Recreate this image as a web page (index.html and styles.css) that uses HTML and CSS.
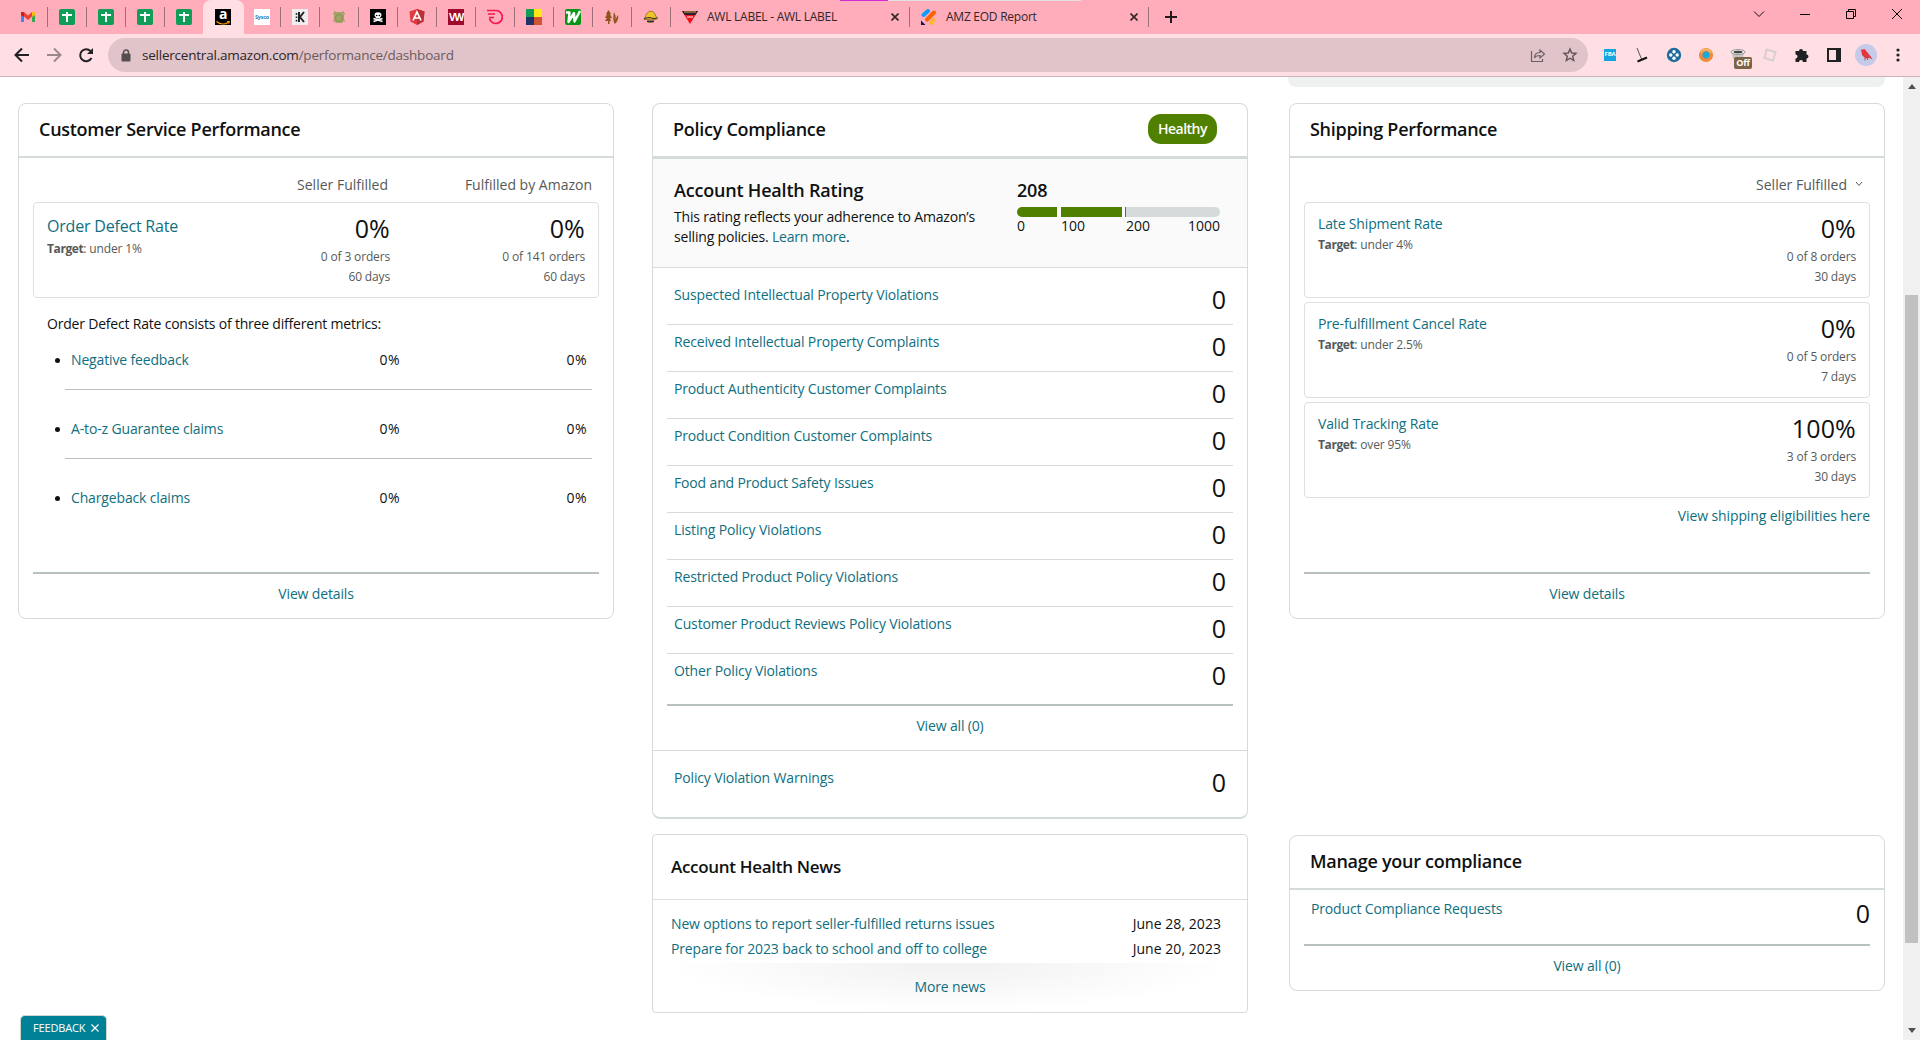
FILE: index.html
```html
<!DOCTYPE html>
<html lang="en">
<head>
  <meta charset="UTF-8" />
  <meta name="viewport" content="width=device-width, initial-scale=1.0"/>
  <title>Account Health</title>
  <link rel="stylesheet" href="styles.css">
</head>
<body>
  <!-- Browser window -->
  <div class="tabstrip">
    <div class="tab"><svg width="16" height="16" viewBox="0 0 16 16"><path d="M1 3v10h3V7z" fill="#4285f4"/><path d="M15 3v10h-3V7z" fill="#34a853"/><path d="M1 3l3 0 4 3.5L12 3v4.5L8 11 4 7.5 1 5.5z" fill="#ea4335"/><path d="M12 3.5L13.500 2.500 15 3v3l-3 2z" fill="#fbbc04"/><path d="M1 3.500l1-.8 2 1V8L1 6z" fill="#c5221f"/></svg></div>
    <div class="tab"><svg width="16" height="16"><rect width="16" height="16" rx="2" fill="#0f9d58"/><path d="M3 6h10M8 3v10" stroke="#fff" stroke-width="2"/></svg></div>
    <div class="tab"><svg width="16" height="16"><rect width="16" height="16" rx="2" fill="#0f9d58"/><path d="M3 6h10M8 3v10" stroke="#fff" stroke-width="2"/></svg></div>
    <div class="tab"><svg width="16" height="16"><rect width="16" height="16" rx="2" fill="#0f9d58"/><path d="M3 6h10M8 3v10" stroke="#fff" stroke-width="2"/></svg></div>
    <div class="tab no-line"><svg width="16" height="16"><rect width="16" height="16" rx="2" fill="#0f9d58"/><path d="M3 6h10M8 3v10" stroke="#fff" stroke-width="2"/></svg></div>
    <div class="tab active"><div class="fav amazon"><span>a</span><svg width="16" height="4" viewBox="0 0 16 4"><path d="M1.500 .5c4 3.200 9 3.200 12 .8M12 .5l2.300.2-.6 1.800" fill="none" stroke="#f90" stroke-width="1.200"/></svg></div></div>
    <div class="tab"><div class="fav sysco">Sysco</div></div>
    <div class="tab"><svg width="16" height="16"><rect width="16" height="16" fill="#eee"/><path d="M7 3v10M12 3L8 8l4 5" fill="none" stroke="#222" stroke-width="2"/><path d="M4.500 4v9" stroke="#222" stroke-width="1.600" stroke-dasharray="1.700 1.700"/></svg></div>
    <div class="tab"><svg width="16" height="16" viewBox="0 0 16 16"><path d="M3 2l3 1h4l3-1v10l-2 2H5l-2-2z" fill="#a3a36b"/><path d="M2 5l2-1M14 5l-2-1M2 12l2-1M14 12l-2-1" stroke="#b4a070" stroke-width="1.500"/><circle cx="8" cy="9" r="3.500" fill="none" stroke="#83934b"/></svg></div>
    <div class="tab"><svg width="16" height="16"><rect width="16" height="16" fill="#000"/><path d="M3.500 9.500l9 3M12.500 9.500l-9 3" stroke="#fff" stroke-width="1.600"/><path d="M4.500 6a3.500 2.800 0 0 1 7 0c0 2-1.500 1.500-1.500 3.500H6C6 7.500 4.500 8 4.500 6z" fill="#fff"/><circle cx="6.700" cy="6.500" r=".8" /><circle cx="9.300" cy="6.500" r=".8"/></svg></div>
    <div class="tab"><svg width="16" height="16"><path d="M8 0l7.500 2.500-1 10L8 16l-6.500-3.500-1-10z" fill="#dd3c41"/><path d="M8 0l7.500 2.500-1 10L8 16z" fill="#b83136"/><path d="M4 11.500L8 3l4 8.500M5.500 9h5" fill="none" stroke="#fff" stroke-width="1.700"/></svg></div>
    <div class="tab"><div class="fav vw">VW</div></div>
    <div class="tab"><svg width="16" height="16"><path d="M0 1.500h9a6.500 6.500 0 1 1-6.500 8M1 5h7M2 8.500h5" fill="none" stroke="#f8174b" stroke-width="1.700"/></svg></div>
    <div class="tab"><svg width="16" height="16"><path d="M0 0h8v8H0z" fill="#0f9d58"/><path d="M8 0h8v8H8z" fill="#ffe81a"/><path d="M0 8h8v8H0z" fill="#243269"/><path d="M8 8h8v8H8z" fill="#d35433"/></svg></div>
    <div class="tab"><svg width="16" height="16"><rect width="16" height="16" rx="2" fill="#0a9416"/><path d="M1 3.500h3.500L3.500 13 9 4l.5 8.500L15 2" fill="none" stroke="#fff" stroke-width="2.400" stroke-linejoin="round"/></svg></div>
    <div class="tab"><svg width="16" height="16"><path d="M4.500 1L7 5H6l2 4H6l1 3H5.500v3h-1.500v-3H1l2-3H1l2-4H2z" fill="#8e561b"/><path d="M10 3c2.500 4 2 8 .5 12-1.500-4-1.500-7-.5-12zM14 6c1 4-1 7-3 9 0-4 1-6 3-9z" fill="#8e561b"/></svg></div>
    <div class="tab"><svg width="16" height="16"><path d="M2.500 8C4 0 12 1 12.500 7l2.500 2-2 1.500H1z" fill="#efc529" stroke="#7a6223" stroke-width=".7"/><path d="M1 9.500l5-1 5 1 3-.5" fill="none" stroke="#332c20" stroke-width="1.200"/><path d="M3 10h9l-2 4H5z" fill="#b47b4c"/><path d="M4 12.500h7" stroke="#234" stroke-width="1.200"/></svg></div>
    <div class="tab wide"><svg width="16" height="16"><path d="M0 2h16l-8 13z" fill="#ef101c"/><path d="M0 2h16l-2.500 4h-11z" fill="#302034"/><path d="M2 3h12" stroke="#d7a83c"/><path d="M5 8h6" stroke="#fff"/></svg><span class="tab-name">AWL LABEL - AWL LABEL</span><svg class="close" width="8" height="8"><path d="M.5.5l7 7M7.500.5l-7 7" stroke="#322628" stroke-width="1.600"/></svg></div>
    <div class="tab wide"><svg width="16" height="16"><g stroke-width="4" stroke-linecap="round"><path d="M2.500 6L7 2" stroke="#0a9dff"/><path d="M6 10.500l7-7" stroke="#ff6100"/><path d="M10 14l2.500-3" stroke="#ffb629"/></g><path d="M0 11.500V16h4.500z" fill="#0a1551"/></svg><span class="tab-name">AMZ EOD Report</span><svg class="close" width="8" height="8"><path d="M.5.5l7 7M7.500.5l-7 7" stroke="#322628" stroke-width="1.600"/></svg></div>
    <svg class="new-tab" width="12" height="12"><path d="M6 0v12M0 6h12" stroke="#24191b" stroke-width="2"/></svg>
    <div class="window-controls">
      <svg width="12" height="12"><path d="M1 3.500l5 5 5-5" fill="none" stroke="#111"/></svg>
      <svg width="12" height="12"><path d="M1 6.500h10" stroke="#000"/></svg>
      <svg width="12" height="12"><path d="M1.500 3.500h7v7h-7zM3.500 3.500v-2h7v7h-2" fill="none" stroke="#000"/></svg>
      <svg width="12" height="12"><path d="M1 1l10 10M11 1L1 11" stroke="#000"/></svg>
    </div>
    <div class="load-bar"></div>
  </div>
  <div class="toolbar">
    <svg width="16" height="16"><path d="M15 8H2M8 1.500L1.500 8 8 14.500" fill="none" stroke="#202124" stroke-width="2"/></svg>
    <svg width="16" height="16"><path d="M1 8h13M8 1.500L14.500 8 8 14.500" fill="none" stroke="#9b878c" stroke-width="2"/></svg>
    <svg width="16" height="16"><path d="M13.500 11a6 6 0 1 1-1-7" fill="none" stroke="#202124" stroke-width="2"/><path d="M15 1v6H9z" fill="#202124"/></svg>
    <div class="address">
      <svg class="lock" width="10" height="13"><path d="M2.500 5V3.500a2.500 2.500 0 0 1 5 0V5" fill="none" stroke="#564d50" stroke-width="1.500"/><rect x=".5" y="4.500" width="9" height="8" rx="1" fill="#564d50"/></svg>
      <span class="url">sellercentral.amazon.com<span>/performance/dashboard</span></span>
      <svg class="share" width="16" height="16"><path d="M1.500 4v10.500h11V12" fill="none" stroke="#6c5f63" stroke-width="1.200"/><path d="M4.500 11c0-4 2-5.500 5.500-5.500V3l4.500 4L10 11V8.500C7 8.500 5.500 9 4.500 11z" fill="none" stroke="#6c5f63" stroke-width="1.200"/></svg>
      <svg width="16" height="16"><path d="M8 2l1.700 4 4.300.4-3.300 2.800 1 4.300L8 11.200l-3.700 2.300 1-4.300L2 6.400 6.300 6z" fill="none" stroke="#5f5357" stroke-width="1.400"/></svg>
    </div>
    <div class="extensions">
      <span class="fba">FBA</span>
      <svg width="16" height="16"><path d="M3 1l4.500 11" stroke="#555" stroke-width="1"/><path d="M3.500 14.500L13 10.500" stroke="#111" stroke-width="2"/></svg>
      <svg width="16" height="16"><circle cx="8" cy="8" r="7.200" fill="#1f6b9b"/><g fill="#fff"><circle cx="8" cy="4.800" r="1.700"/><circle cx="8" cy="11.200" r="1.700"/><circle cx="4.800" cy="8" r="1.700"/><circle cx="11.200" cy="8" r="1.700"/></g></svg>
      <svg width="16" height="16"><circle cx="8" cy="8" r="5.300" fill="#19a9dc" stroke="#f08a3c" stroke-width="3.600"/><path d="M3 6a5.300 5.300 0 0 1 10 0" fill="none" stroke="#f5b564" stroke-width="2"/></svg>
      <div class="off-ext"><svg width="16" height="16"><path d="M2 5l1 7h10l1-7z" fill="#c8c2c4"/><ellipse cx="8" cy="5" rx="7" ry="2.500" fill="#eee" stroke="#999"/><ellipse cx="8" cy="5" rx="4.500" ry="1.300" fill="#444"/></svg><span class="off-badge">Off</span></div>
      <svg width="16" height="16"><path d="M4.500 2.500l9 2.500-2.500 8.500-8.500-2.500z" fill="none" stroke="#d7cfcf" stroke-width="2"/></svg>
      <svg width="16" height="16"><path d="M1.500 4H5a2 2 0 1 1 4 0h3.500v3.500a2 2 0 1 1 0 4V15H9a2 2 0 0 0-4 0H1.500v-3.500a2 2 0 0 0 0-4z" fill="#202124"/></svg>
      <svg width="16" height="16"><path d="M2 2h12v12H2z" fill="none" stroke="#202124" stroke-width="2"/><path d="M10 2h4v12h-4z" fill="#202124"/></svg>
      <svg width="22" height="22"><circle cx="11" cy="11" r="11" fill="#c5cae9"/><path d="M5.500 6l4-1 3 3.500 3.500 4.500 1.500 2.500-3-1.500-4 .5-3.500-3.500-.5-3.500z" fill="#e8313d"/><path d="M10 10l5 4M10 14v2.500M12.500 14v2" stroke="#b05a54"/></svg>
      <svg width="16" height="16"><g fill="#202124"><circle cx="8" cy="3" r="1.600"/><circle cx="8" cy="8" r="1.600"/><circle cx="8" cy="13" r="1.600"/></g></svg>
    </div>
  </div>

  <div class="viewport">
    <div class="page">
      <!-- Left column -->
      <div class="column">
        <div class="card perf-card">
          <h2 class="card-header">Customer Service Performance</h2>
          <div class="card-body">
            <div class="column-heads"><span>Seller Fulfilled</span><span class="by-amazon">Fulfilled by Amazon</span></div>
            <div class="metric">
              <div class="metric-name"><a class="big-link">Order Defect Rate</a><p><b>Target</b>: under 1%</p></div>
              <div class="metric-value"><strong>0%</strong><span>0 of 3 orders</span><span>60 days</span></div>
              <div class="metric-value amazon-value"><strong>0%</strong><span>0 of 141 orders</span><span>60 days</span></div>
            </div>
            <p class="consists">Order Defect Rate consists of three different metrics:</p>
            <ul class="defects">
              <li><a>Negative feedback</a><span>0%</span><span>0%</span></li>
              <li><a>A-to-z Guarantee claims</a><span>0%</span><span>0%</span></li>
              <li><a>Chargeback claims</a><span>0%</span><span>0%</span></li>
            </ul>
            <div class="card-footer"><a>View details</a></div>
          </div>
        </div>
      </div>

      <!-- Middle column -->
      <div class="column">
        <div class="card policy-card">
          <h2 class="card-header">Policy Compliance <span class="badge">Healthy</span></h2>
          <div class="rating">
            <div class="rating-text">
              <h3>Account Health Rating</h3>
              <p>This rating reflects your adherence to Amazon’s<br>selling policies. <a>Learn more</a>.</p>
            </div>
            <div class="rating-score">
              <h3>208</h3>
              <div class="score-bar"><i class="seg-low"></i><i class="seg-mid"></i><i class="seg-now"></i><i class="seg-rest"></i></div>
              <div class="score-labels"><span>0</span><span>100</span><span>200</span><span>1000</span></div>
            </div>
          </div>
          <div class="policies">
            <div class="policy"><a>Suspected Intellectual Property Violations</a><strong>0</strong></div>
            <div class="policy"><a>Received Intellectual Property Complaints</a><strong>0</strong></div>
            <div class="policy"><a>Product Authenticity Customer Complaints</a><strong>0</strong></div>
            <div class="policy"><a>Product Condition Customer Complaints</a><strong>0</strong></div>
            <div class="policy"><a>Food and Product Safety Issues</a><strong>0</strong></div>
            <div class="policy"><a>Listing Policy Violations</a><strong>0</strong></div>
            <div class="policy"><a>Restricted Product Policy Violations</a><strong>0</strong></div>
            <div class="policy"><a>Customer Product Reviews Policy Violations</a><strong>0</strong></div>
            <div class="policy"><a>Other Policy Violations</a><strong>0</strong></div>
            <div class="card-footer"><a>View all (0)</a></div>
          </div>
          <div class="warnings">
            <div class="policy"><a>Policy Violation Warnings</a><strong>0</strong></div>
          </div>
        </div>
        <div class="card news-card">
          <h2>Account Health News</h2>
          <div class="news">
            <div class="news-item"><a>New options to report seller-fulfilled returns issues</a><span>June 28, 2023</span></div>
            <div class="news-item"><a>Prepare for 2023 back to school and off to college</a><span>June 20, 2023</span></div>
          </div>
          <div class="more-news"><a>More news</a></div>
        </div>
      </div>

      <!-- Right column -->
      <div class="column right-column">
        <div class="top-panel"></div>
        <div class="card perf-card">
          <h2 class="card-header">Shipping Performance</h2>
          <div class="card-body">
            <div class="column-heads select"><span>Seller Fulfilled</span><svg width="8" height="6"><path d="M1 1l3 3.500L7 1" fill="none" stroke="#565959"/></svg></div>
            <div class="metric">
              <div class="metric-name"><a>Late Shipment Rate</a><p><b>Target</b>: under 4%</p></div>
              <div class="metric-value"><strong>0%</strong><span>0 of 8 orders</span><span>30 days</span></div>
            </div>
            <div class="metric">
              <div class="metric-name"><a>Pre-fulfillment Cancel Rate</a><p><b>Target</b>: under 2.5%</p></div>
              <div class="metric-value"><strong>0%</strong><span>0 of 5 orders</span><span>7 days</span></div>
            </div>
            <div class="metric">
              <div class="metric-name"><a>Valid Tracking Rate</a><p><b>Target</b>: over 95%</p></div>
              <div class="metric-value"><strong>100%</strong><span>3 of 3 orders</span><span>30 days</span></div>
            </div>
            <a class="eligibilities">View shipping eligibilities here</a>
            <div class="card-footer"><a>View details</a></div>
          </div>
        </div>
        <div class="card manage-card">
          <h2 class="card-header">Manage your compliance</h2>
          <div class="card-body">
            <div class="policy"><a>Product Compliance Requests</a><strong>0</strong></div>
            <div class="card-footer"><a>View all (0)</a></div>
          </div>
        </div>
      </div>
    </div>

    <div class="scrollbar">
      <svg width="8" height="5"><path d="M0 5l4-5 4 5z" fill="#505050"/></svg>
      <div class="thumb"></div>
      <svg width="8" height="5"><path d="M0 0l4 5 4-5z" fill="#505050"/></svg>
    </div>
    <div class="feedback">FEEDBACK <svg width="8" height="8"><path d="M.5.5l7 7M7.500.5l-7 7" stroke="#fff" stroke-width="1.200"/></svg></div>
  </div>
</body>
</html>
```
FILE: styles.css
```css
* {
  box-sizing: border-box;
}
body {
  margin: 0;
  height: 1040px;
  overflow: hidden;
  background: #fff;
  color: #0f1111;
  font-family: "Open Sans", "Noto Sans", sans-serif;
  font-size: 14px;
  line-height: 20px;
  letter-spacing: -0.15px;
}
h2, h3, p, ul {
  margin: 0;
  padding: 0;
}
svg {
  display: block;
  flex: none;
}
a {
  color: #0f6f80;
}

/* Browser window */
.tabstrip {
  position: relative;
  display: flex;
  height: 34px;
  padding-left: 9px;
  background: #ffacbb;
  color: #322628;
  font-size: 12px;
  letter-spacing: -0.25px;
}
.tab {
  position: relative;
  display: flex;
  align-items: center;
  width: 39px;
  height: 34px;
  padding-left: 11px;
}
.tab::after {
  content: "";
  position: absolute;
  right: 0;
  top: 7px;
  width: 1px;
  height: 20px;
  background: #9c7078;
}
.tab.no-line::after,
.tab.active::after {
  display: none;
}
.tab.active {
  width: 41px;
  margin: 0 0 0 -1px;
  padding-left: 12px;
  border-radius: 8px 8px 0 0;
  background: #ffdfe4;
}
.tab.active + .tab {
  width: 37px;
  padding-left: 10px;
}
.tab.wide {
  width: 239px;
}
.tab-name {
  flex: 1;
  margin-left: 9px;
}
.close {
  margin-right: 11px;
}
.fav {
  width: 16px;
  height: 16px;
  text-align: center;
  font-weight: 700;
}
.amazon {
  background: #000;
  color: #fff;
  font-size: 14px;
}
.amazon span {
  display: block;
  height: 12px;
  line-height: 9px;
}
.sysco {
  background: #fff;
  color: #1b87c9;
  font-size: 5.5px;
  line-height: 16px;
}
.vw {
  background: #a00b2d;
  color: #fff;
  font-size: 10px;
  line-height: 16px;
  letter-spacing: -1px;
}
.new-tab {
  margin: 11px 0 0 16px;
}
.window-controls {
  display: flex;
  gap: 34px;
  margin: 8px 17px 0 auto;
}
.load-bar {
  position: absolute;
  left: 840px;
  top: 0;
  width: 241px;
  height: 1px;
  background: linear-gradient(to right, #d42bd4 48px, #e5dde0 48px);
}
.toolbar {
  display: flex;
  align-items: center;
  gap: 16px;
  height: 43px;
  padding-left: 14px;
  border-bottom: 1px solid #cbb3b8;
  background: #ffdfe4;
}
.address {
  display: flex;
  align-items: center;
  width: 1480px;
  height: 34px;
  margin-left: -2px;
  padding: 0 10px 0 13px;
  border-radius: 17px;
  background: #e1c4c9;
}
.url {
  flex: 1;
  margin-left: 11px;
  color: #2d2527;
  font-size: 13.5px;
  letter-spacing: -0.22px;
}
.url span {
  color: #6a5b5f;
}
.share {
  margin-right: 16px;
}
.extensions {
  display: grid;
  grid-template-columns: repeat(10, 32px);
  align-items: center;
  justify-items: center;
  margin-left: -10px;
}
.fba {
  width: 12px;
  height: 12px;
  background: #14a4de;
  color: #fff;
  font-size: 6px;
  font-weight: 700;
  line-height: 11px;
  text-align: center;
}
.off-ext {
  position: relative;
}
.off-badge {
  position: absolute;
  left: 4px;
  top: 10px;
  width: 18px;
  height: 12px;
  border-radius: 2px;
  background: #7b6446;
  color: #fff;
  font-size: 9px;
  font-weight: 700;
  line-height: 12px;
  text-align: center;
}

/* Page */
.viewport {
  position: relative;
  display: flex;
  height: 963px;
}
.page {
  flex: 1;
  display: flex;
  padding: 0 0 0 18px;
}
.column {
  width: 596px;
  margin-right: 38px;
  padding-top: 26px;
}
.right-column {
  margin: 0 0 0 3px;
  padding-top: 0;
}
.top-panel {
  height: 10px;
  margin: 0 0 16px -1px;
  border-radius: 0 0 8px 8px;
  background: #eff1f1;
}
.card {
  border: 1px solid #d5dbdb;
  border-radius: 8px;
  background: #fff;
}
.card-header {
  display: flex;
  align-items: center;
  justify-content: space-between;
  height: 54px;
  padding: 0 20px 2px;
  border-bottom: 2px solid #d5dbdb;
  font-size: 18px;
  font-weight: 600;
  letter-spacing: -0.28px;
}
.card-body {
  padding: 0 14px;
}
.card-footer {
  border-top: 2px solid #b9c0c0;
  padding-top: 10px;
  text-align: center;
}
.perf-card {
  height: 516px;
}
.perf-card .card-body {
  display: flex;
  flex-direction: column;
  height: 460px;
}
.perf-card .card-footer {
  height: 46px;
  margin-top: auto;
}
.column-heads {
  display: flex;
  justify-content: flex-end;
  height: 44px;
  padding: 17px 7px 0 0;
  color: #565959;
  letter-spacing: 0;
}
.by-amazon {
  width: 204px;
  text-align: right;
}
.select {
  gap: 8px;
}
.select svg {
  margin-top: 6px;
}
.metric {
  display: flex;
  height: 96px;
  padding: 11px 13px 0;
  border: 1px solid #dde0e0;
  border-radius: 4px;
  color: #565959;
  font-size: 12px;
}
.metric + .metric {
  margin-top: 4px;
}
.metric-name {
  flex: 1;
}
.metric-name a {
  font-size: 14px;
}
.metric-name .big-link {
  display: block;
  height: 25px;
  padding-top: 2px;
  font-size: 16px;
  letter-spacing: -0.2px;
}
.metric-value {
  display: flex;
  flex-direction: column;
  text-align: right;
}
.amazon-value {
  width: 195px;
}
.metric strong {
  height: 33px;
  color: #0f1111;
  font-size: 25px;
  font-weight: 400;
  line-height: 28px;
  letter-spacing: 0.2px;
}
.metric b {
  font-weight: 700;
  letter-spacing: -0.4px;
}
.consists {
  margin: 16px 0 0 14px;
  letter-spacing: -0.2px;
}
.defects {
  margin: 16px 7px 0 32px;
  list-style: none;
}
.defects li {
  position: relative;
  display: flex;
  height: 69px;
  padding: 0 5px 0 6px;
}
.defects li:not(:last-child) {
  background: linear-gradient(#bbbfbf, #bbbfbf) 0 39px / 100% 1px no-repeat;
}
.defects li::before {
  content: "";
  position: absolute;
  left: -10px;
  top: 8px;
  width: 5px;
  height: 5px;
  border-radius: 50%;
  background: #0f1111;
}
.defects a {
  flex: 1;
  white-space: nowrap;
}
.defects span {
  width: 100px;
  letter-spacing: 0.5px;
  text-align: right;
}
.defects span:last-child {
  width: 187px;
}
.eligibilities {
  margin-top: 8px;
  letter-spacing: -0.1px;
  text-align: right;
}

/* Policy compliance */
.policy-card {
  height: 716px;
  border-bottom-width: 2px;
}
.policy-card .card-header {
  height: 55px;
  padding: 0 30px 2px 20px;
  border-bottom-width: 3px;
}
.badge {
  height: 30px;
  margin-top: -1px;
  padding: 0 10px;
  border-radius: 13px;
  background: #508000;
  color: #fff;
  font-size: 14px;
  line-height: 29px;
  letter-spacing: -0.5px;
}
.rating {
  display: flex;
  justify-content: space-between;
  height: 109px;
  padding: 21px 27px 0 21px;
  border-bottom: 1px solid #d5dbdb;
  background: #fafafa;
}
.rating h3 {
  height: 27px;
  font-size: 18px;
  font-weight: 600;
  line-height: 20px;
  letter-spacing: -0.2px;
}
.rating p {
  letter-spacing: -0.18px;
}
.rating-score {
  width: 203px;
}
.score-bar {
  display: flex;
  height: 10px;
  border-radius: 5px;
  overflow: hidden;
  background: #fafafa;
}
.seg-low {
  width: 40px;
  margin-right: 4px;
  background: #508000;
}
.seg-mid {
  width: 61px;
  margin-right: 3px;
  background: #508000;
}
.seg-now {
  width: 1px;
  background: #508000;
}
.seg-rest {
  flex: 1;
  background: #d5dbdb;
}
.score-labels {
  display: grid;
  grid-template-columns: 44px 65px 1fr auto;
  line-height: 17px;
  letter-spacing: 0;
}
.policies {
  height: 483px;
  padding: 10px 14px 0;
  border-bottom: 1px solid #d5dbdb;
}
.policy {
  display: flex;
  justify-content: space-between;
  height: 47px;
  padding: 7px 7px 0;
  border-bottom: 1px solid #d5dbdb;
}
.policy strong {
  padding-top: 2px;
  font-size: 25px;
  font-weight: 400;
  line-height: 24px;
}
.policies .policy:nth-child(9) {
  height: 50px;
  border-bottom: none;
}
.warnings {
  padding: 10px 14px;
}
.warnings .policy {
  border: none;
}

/* News */
.news-card {
  height: 179px;
  margin-top: 15px;
  border-radius: 4px;
}
.news-card h2 {
  height: 65px;
  padding-left: 18px;
  border-bottom: 1px solid #dde0e0;
  font-size: 17px;
  font-weight: 600;
  line-height: 63px;
  letter-spacing: -0.3px;
}
.news {
  padding: 11px 26px 0 18px;
}
.news-item {
  display: flex;
  justify-content: space-between;
  line-height: 25px;
}
.news-item span {
  letter-spacing: 0.05px;
}
.more-news {
  height: 48px;
  margin: 2px 16px 0;
  background: radial-gradient(ellipse 50% 100% at 50% 0, #f1f1f1, #fff);
  line-height: 48px;
  text-align: center;
}

/* Compliance */
.manage-card {
  height: 156px;
  margin-top: 216px;
}
.manage-card .policy {
  height: 54px;
  padding: 9px 0 0 7px;
  border: none;
}

.scrollbar {
  display: flex;
  flex-direction: column;
  align-items: center;
  width: 17px;
  padding: 7px 0;
  background: #f0f0f0;
}
.thumb {
  width: 13px;
  height: 648px;
  margin: 206px 0 auto;
  background: #c1c1c1;
}
.feedback {
  position: absolute;
  left: 20px;
  bottom: 0;
  display: flex;
  align-items: center;
  gap: 6px;
  width: 87px;
  height: 25px;
  padding-left: 12px;
  border: 1px solid #cfd6d6;
  border-bottom: none;
  border-radius: 5px 5px 0 0;
  background: #008296;
  color: #fff;
  font-size: 11px;
}
```
